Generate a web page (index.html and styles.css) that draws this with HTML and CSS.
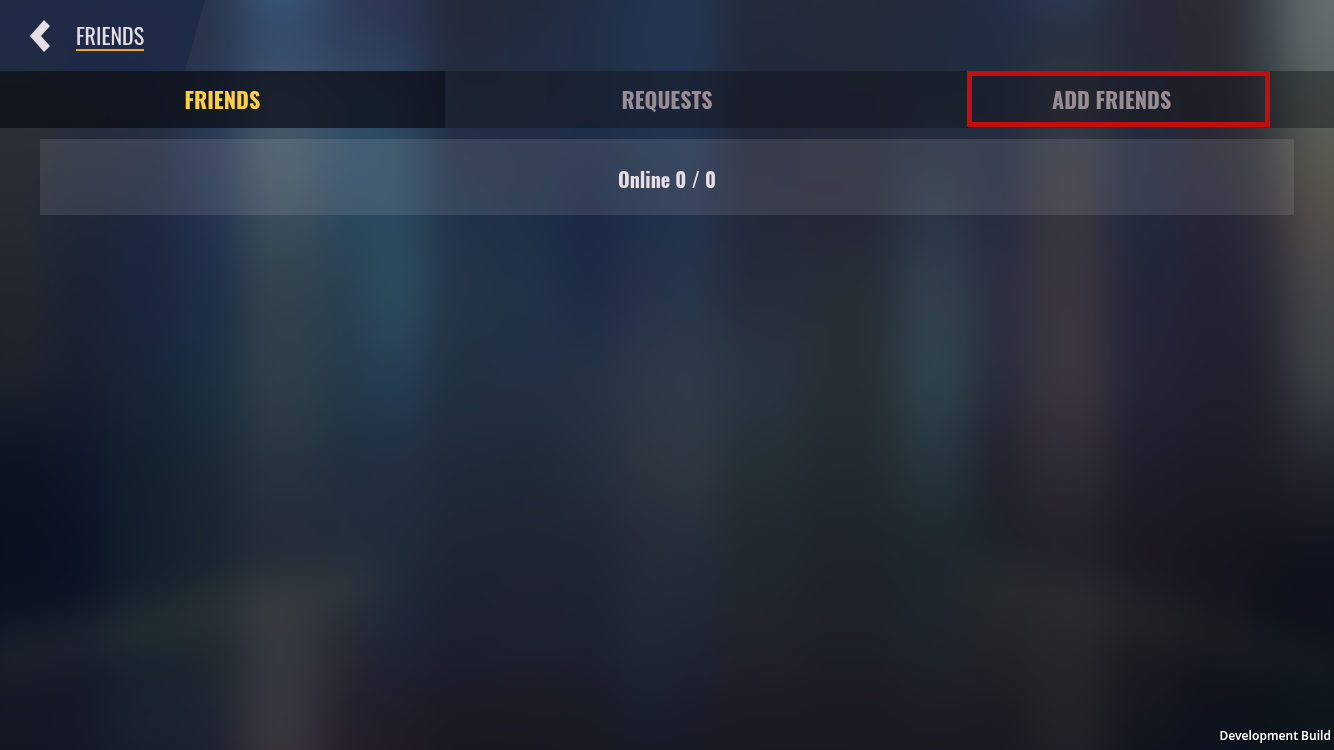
FILE: index.html
```html
<!DOCTYPE html>
<html lang="en">
<head>
    <meta charset="UTF-8">
    <meta name="viewport" content="width=device-width, initial-scale=1.0">
    <title>Friends</title>
    <link rel="stylesheet" href="styles.css">
</head>
<body>
    <!-- Blurred city lights, one strip per column -->
    <div class="backdrop" aria-hidden="true">
        <div class="strip s1"></div>
        <div class="strip s2"></div>
        <div class="strip s3"></div>
        <div class="strip s4"></div>
        <div class="strip s5"></div>
        <div class="strip s6"></div>
        <div class="strip s7"></div>
        <div class="strip s8"></div>
        <div class="strip s9"></div>
        <div class="strip s10"></div>
        <div class="strip s11"></div>
        <div class="strip s12"></div>
        <div class="strip s13"></div>
        <div class="strip s14"></div>
        <div class="strip s15"></div>
        <div class="strip s16"></div>
        <div class="strip s17"></div>
        <div class="strip s18"></div>
        <div class="strip s19"></div>
        <div class="strip s20"></div>
        <div class="strip s21"></div>
        <div class="beam beam-left"></div>
        <div class="beam beam-right"></div>
    </div>

    <header class="header">
        <div class="header-title">
            <button class="back-button" aria-label="Back">
                <svg width="20" height="32" viewBox="0 0 20 32">
                    <path d="M14 0L20 6L11 16L20 26L14 32L0 16Z" fill="#e8dfe4"/>
                </svg>
            </button>
            <h1 class="title">FRIENDS</h1>
        </div>
    </header>

    <nav class="tabs">
        <button class="tab active">FRIENDS</button>
        <button class="tab">REQUESTS</button>
        <button class="tab">ADD FRIENDS<span class="highlight"></span></button>
    </nav>

    <main class="content">
        <div class="online-bar">Online 0 / 0</div>
    </main>

    <div class="build-label">Development Build</div>
</body>
</html>
```

FILE: styles.css
```css
* {
    box-sizing: border-box;
}
body {
    margin: 0;
    min-height: 100vh;
    overflow: hidden;
    background-color: #1c2230;
    color: #e8dfe4;
    font-family: Oswald, "Roboto Condensed", "Liberation Sans Narrow", sans-serif;
}
button {
    border: none;
    background: none;
    padding: 0;
    font-family: inherit;
    cursor: pointer;
}

/* Backdrop */
.backdrop {
    position: fixed;
    inset: -50px;
    z-index: -1;
    display: flex;
    filter: blur(20px);
}
.strip {
    flex: 60;
}
.s1 {
    flex: 100;
    background: linear-gradient(#2c3542, #2a344a, #2c3036, #262b34, #22272e, #1d222b, #0d1320, #0b101e, #0d1322, #141924, #12151f);
}
.s2 {
    background: linear-gradient(#2a3448, #29334a, #2a2e3c, #1f2738, #1c2232, #1a1e30, #10172a, #0b1226, #0e1424, #171a28, #101424);
}
.s3 {
    flex: 70;
    background: linear-gradient(#2a344a, #28334a, #262f42, #1e283e, #1a253e, #172638, #12212e, #11202b, #15222b, #1a2230, #171a2b);
}
.s4 {
    background: linear-gradient(#2a3548, #28344c, #2a3954, #243250, #1e2d47, #1b2e40, #192835, #18252f, #1e272e, #1e2530, #1a1b2c);
}
.s5 {
    flex: 80;
    background: linear-gradient(#3b5f82, #34496b, #46596a, #3d4f5e, #31414c, #2f3f49, #27353f, #242a36, #34393f, #37373f, #3a2e36);
}
.s6 {
    flex: 50;
    background: linear-gradient(#2c3853, #303e5c, #31506a, #2b485e, #294050, #253a4b, #202f40, #202d3a, #282c34, #241f2d, #241d28);
}
.s7 {
    flex: 55;
    background: linear-gradient(#2b344d, #2b3856, #2c4a62, #2c4a60, #2e4d61, #263e54, #212f42, #202c3a, #1e2638, #1f1c28, #201a25);
}
.s8 {
    flex: 75;
    background: linear-gradient(#242a3b, #242a3b, #222e45, #203248, #233547, #213142, #1f2b3a, #1f2534, #1c2030, #1a1a24, #17151e);
}
.s9 {
    background: linear-gradient(#20293a, #222c40, #222e46, #1e2e46, #223248, #223144, #1f2a38, #202433, #1e2230, #1a1a23, #16151e);
}
.s10 {
    background: linear-gradient(#202c42, #202f46, #202f48, #1a2744, #1c2a45, #253345, #232f3d, #202533, #1d2230, #191b24, #15161f);
}
.s11 {
    flex: 50;
    background: linear-gradient(#23334e, #24344f, #223350, #1f304a, #253148, #2d3948, #2e353e, #272b37, #22283a, #1a1f2c, #14161f);
}
.s12 {
    flex: 50;
    background: linear-gradient(#243550, #243552, #223450, #22324e, #26364a, #2e3b4b, #303941, #252d39, #202536, #191c28, #15161f);
}
.s13 {
    flex: 80;
    background: linear-gradient(#242c3f, #222a3c, #222638, #23283a, #272b3b, #2a3541, #252f36, #20292f, #21242b, #1c1a24, #16161e);
}
.s14 {
    flex: 100;
    background: linear-gradient(#252d3a, #232a3a, #242939, #252736, #272e36, #272f36, #232b30, #1f252a, #1d2128, #1b1922, #17161e);
}
.s15 {
    flex: 70;
    background: linear-gradient(#232838, #212b3e, #232c3e, #2a3545, #31404e, #2f434a, #26363e, #1e272e, #1f252c, #1c1c26, #18161e);
}
.s16 {
    background: linear-gradient(#22304a, #212c42, #222b40, #262b3f, #2c2f41, #2a2d3c, #22222d, #1c222a, #24262a, #1b1a22, #18151e);
}
.s17 {
    flex: 80;
    background: linear-gradient(#2d4563, #28303f, #343945, #36363f, #3a353f, #3b3640, #302c36, #221f2b, #28272c, #222227, #1e1c27);
}
.s18 {
    flex: 70;
    background: linear-gradient(#2d2833, #28293a, #242a3e, #22293e, #222538, #252437, #1f1d2a, #1b1824, #1c1a22, #15171f, #0b111d);
}
.s19 {
    flex: 70;
    background: linear-gradient(#2f2b32, #2b2a32, #2a2935, #272636, #232234, #22202d, #1d1b27, #171620, #14151d, #0f131d, #08101e);
}
.s20 {
    flex: 40;
    background: linear-gradient(#434d55, #3d474e, #363a3d, #322f37, #2a2936, #23202c, #1f1d28, #12141d, #0e111b, #0e141c, #09111c);
}
.s21 {
    flex: 95;
    background: linear-gradient(#6a7072, #61696c, #566156, #584f4a, #454749, #3c4347, #24262e, #12141f, #0c101b, #0f161c, #0b101a);
}
.beam {
    position: absolute;
    top: 650px;
    width: 400px;
    height: 40px;
    background-color: rgba(80, 84, 76, 0.25);
}
.beam-left {
    left: 30px;
    transform: rotate(-12deg);
}
.beam-right {
    right: 30px;
    transform: rotate(14deg);
    opacity: 0.6;
}

/* Header */
.header {
    height: 71px;
}
.header-title {
    display: flex;
    align-items: center;
    gap: 26px;
    width: 205px;
    height: 100%;
    padding-left: 30px;
    background-color: rgba(14, 30, 68, 0.4);
    clip-path: polygon(0 0, 100% 0, 185px 100%, 0 100%);
}
.back-button {
    display: flex;
}
.title {
    margin: 0;
    font-size: 22px;
    font-weight: 400;
    line-height: 28px;
    border-bottom: 2px solid #f0a324;
}

/* Tabs */
.tabs {
    display: flex;
    height: 57px;
}
.tab {
    position: relative;
    flex: 1;
    padding-bottom: 2px;
    background-color: rgba(14, 16, 20, 0.4);
    color: #988c95;
    font-size: 22px;
    font-weight: 700;
}
.tab.active {
    background-color: rgba(10, 12, 18, 0.7);
    color: #ffd045;
}
.highlight {
    position: absolute;
    top: 0;
    bottom: 1px;
    left: 78px;
    right: 64px;
    border: 5px solid #c40e0e;
}

/* Content */
.content {
    padding: 11px 40px;
}
.online-bar {
    display: flex;
    align-items: center;
    justify-content: center;
    height: 76px;
    padding-top: 4px;
    background-color: rgba(240, 240, 240, 0.11);
    font-size: 20px;
    font-weight: 700;
}

.build-label {
    position: fixed;
    right: 3px;
    bottom: 5px;
    color: #fff;
    font-family: "Noto Sans", sans-serif;
    font-size: 12px;
    font-weight: 600;
    line-height: 18px;
    text-shadow: 1px 1px 1px #000;
}
```
